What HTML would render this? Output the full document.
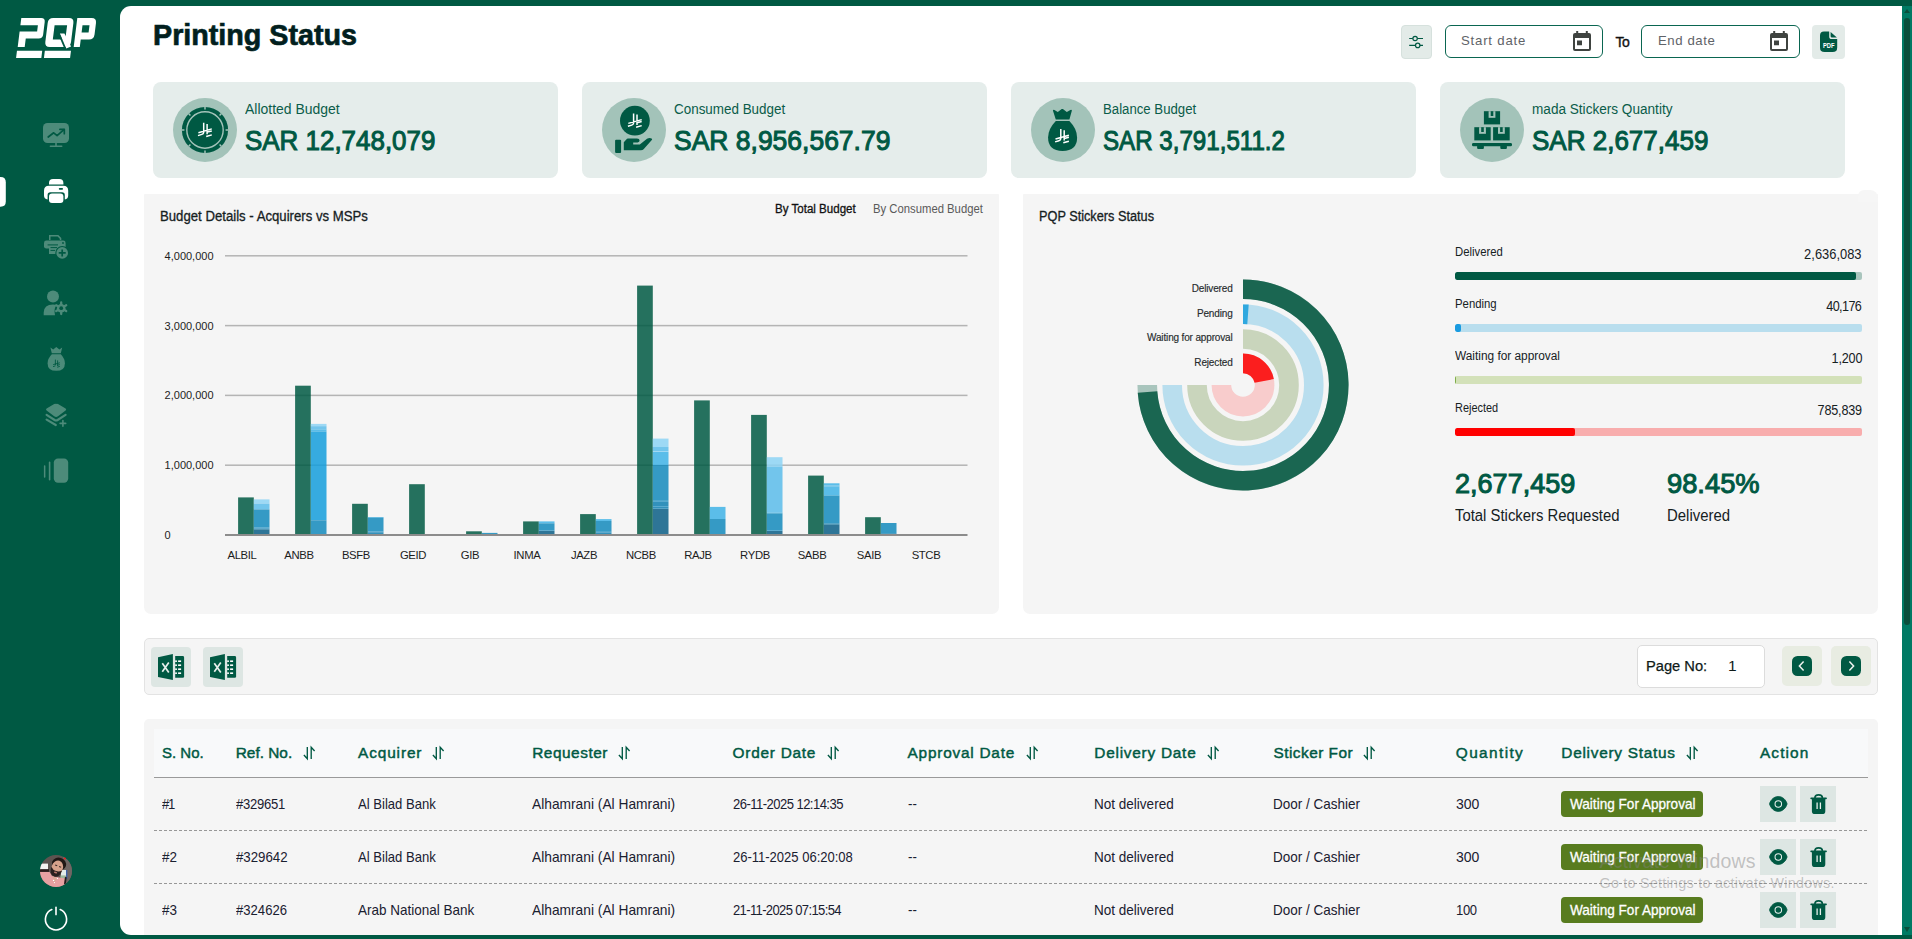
<!DOCTYPE html>
<html lang="en">
<head>
<meta charset="utf-8">
<title>Printing Status</title>
<style>
*{box-sizing:border-box;margin:0;padding:0}
html,body{width:1912px;height:939px;overflow:hidden;background:#005943;font-family:"Liberation Sans",sans-serif;}
body{position:relative}
.abs{position:absolute}
.t{position:absolute;white-space:nowrap;line-height:1}
#main{position:absolute;left:120px;top:6px;width:1782px;height:929px;background:#fff;border-radius:11px 0 0 11px;}
/* scrollbar */
#sb{position:absolute;left:1902px;top:6px;width:10px;height:929px;background:#007a64}
#sb .th{position:absolute;left:2px;top:12px;width:6px;height:607px;border-radius:3px;background:#0a4f3c}
#sb .up{position:absolute;left:2px;top:3px;width:0;height:0;border-left:3px solid transparent;border-right:3px solid transparent;border-bottom:4px solid #0a4f3c}
#sb .dn{position:absolute;left:1.5px;bottom:3px;width:0;height:0;border-left:3.5px solid transparent;border-right:3.5px solid transparent;border-top:5px solid #0a4f3c}
/* cards */
.card{position:absolute;top:82px;width:405px;height:96px;background:#e5edeb;border-radius:8px}
.card .circ{position:absolute;left:20px;top:16px;width:64px;height:64px;border-radius:50%;background:#a3c3b9}
.card .lb{position:absolute;left:92px;top:19px;font-size:14px;color:#0a5c49;white-space:nowrap;line-height:16px}
.card .val{position:absolute;left:92px;top:43px;font-size:27.5px;color:#005943;white-space:nowrap;line-height:32px;-webkit-text-stroke:1.05px #005943}
.panel{position:absolute;top:194px;width:855px;height:420px;background:#f5f5f5;border-radius:1px 1px 7px 7px}
.th{font-size:15.4px;line-height:18px;color:#005943;-webkit-text-stroke:.45px #005943}
.td{font-size:15px;line-height:18px;color:#1a2030}
</style>
</head>
<body>
<div id="main"></div>
<div id="sb"><div class="up"></div><div class="th"></div><div class="dn"></div></div>

<!-- SIDEBAR -->

<svg class="abs" style="left:0;top:0" width="120" height="939" viewBox="0 0 120 939">
 <!-- logo -->
 <g fill="#fff" transform="matrix(1,0,-0.124,1,5.83,0)">
  <path d="M17.7 18 H37.6 Q41.6 18 41.6 22 V34.4 Q41.6 38.4 37.6 38.4 H24.7 V47 H17.7 V31.5 H35.2 V25.2 H17.7 Z"/>
  <path fill-rule="evenodd" d="M49.7 18 H65.4 Q70.4 18 70.4 23 V42 Q70.4 47 65.4 47 H49.7 Q44.7 47 44.7 42 V23 Q44.7 18 49.7 18 Z M51.9 25.2 H64.4 V39.6 H51.9 Z"/>
  <path d="M58 33.6 H62.8 L71 46.4 L66.4 48.4 Z"/>
  <path d="M56.9 33 L65.7 48.8" stroke="#005943" stroke-width="1.7" fill="none"/>
  <path fill-rule="evenodd" d="M73.7 18 H88 Q93 18 93 23 V34.6 Q93 39.6 88 39.6 H79.8 V47 H73.7 Z M79.8 25.2 H86.8 V32.6 H79.8 Z"/>
  <rect x="17.4" y="50.7" width="25.3" height="7.3"/>
  <rect x="45.3" y="50.7" width="26.1" height="7.3"/>
 </g>
 <!-- active marker -->
 <path d="M0 177 H.6 Q5.8 177 5.8 182.2 V201.6 Q5.8 206.8 .6 206.8 H0 Z" fill="#fff"/>
 <!-- icon1 monitor -->
 <g fill="#4d8b7a" stroke="none">
  <rect x="43" y="123" width="26" height="20" rx="4.5"/>
  <rect x="55.2" y="143" width="1.6" height="3"/>
  <rect x="49.6" y="145.5" width="12.9" height="1.6" rx=".8"/>
 </g>
 <g fill="none" stroke="#005943" stroke-width="1.7" stroke-linecap="round" stroke-linejoin="round">
  <path d="M48.2 137 L53.7 132.8 L57.1 135.6 L63.9 129.6"/>
  <path d="M59.9 129.3 H64.3 V133.7"/>
 </g>
 <!-- icon2 printer (active) -->
 <g fill="#fff">
  <path d="M49 184.6 V183 Q49 179 53 179 H59.4 Q63.4 179 63.4 183 V184.6 Z"/>
  <path d="M44 190.8 Q44 185.8 49 185.8 H63.2 Q68.2 185.8 68.2 190.8 V195.5 Q68.2 199 64.8 199.4 V195 Q64.8 192.2 62 192.2 H50.4 Q47.6 192.2 47.6 195 V199.4 Q44 199 44 195.5 Z"/>
  <rect x="49" y="193.5" width="14.4" height="9.5" rx="3"/>
 </g>
 <rect x="58.8" y="188" width="4.2" height="1.7" rx=".8" fill="#005943"/>
 <!-- icon3 printer plus -->
 <g fill="#4d8b7a">
  <path d="M49 240 V235 H58.3 L61.3 238 V240 H59.8 V238.8 L57.6 236.5 H50.5 V240 Z"/>
  <rect x="44" y="240.6" width="21.6" height="8" rx="2.4"/>
  <rect x="49" y="245.4" width="8" height="8.6"/>
 </g>
 <circle cx="63" cy="243" r=".9" fill="#005943"/>
 <path d="M50.5 247.6 H57 M50.5 250.4 H55" stroke="#005943" stroke-width="1" fill="none"/>
 <rect x="47.6" y="244.4" width="10.4" height="1" fill="#005943"/>
 <circle cx="62.2" cy="252.9" r="6.9" fill="#005943"/>
 <circle cx="62.2" cy="252.9" r="5.8" fill="#4d8b7a"/>
 <path d="M62.2 249.4 V256.4 M58.7 252.9 H65.7" stroke="#005943" stroke-width="1.7" fill="none"/>
 <!-- icon4 user gear -->
 <g fill="#4d8b7a">
  <circle cx="53" cy="296.6" r="6"/>
  <path d="M43.7 315.2 V312.5 Q44 304.6 53 304.6 Q55 304.6 56.6 305.2 Q53.6 308 55 315.2 Z"/>
  <circle cx="61.2" cy="308.2" r="4.3"/>
  <g stroke="#4d8b7a" stroke-width="2.3" stroke-linecap="round">
   <path d="M61.2 302.4 V314 M56.2 305.3 L66.2 311.1 M56.2 311.1 L66.2 305.3"/>
  </g>
 </g>
 <circle cx="61.2" cy="308.2" r="1.9" fill="#005943"/>
 <!-- icon5 money bag -->
 <g fill="#4d8b7a">
  <path d="M50.4 347.6 L53.2 349.4 L56.3 347 L59.4 349.4 L62.2 347.6 L60.8 353.3 H51.8 Z"/>
  <path d="M51.8 354.3 H60.8 Q64.9 358.6 64.9 363.4 Q64.9 370.8 56.3 370.8 Q47.6 370.8 47.6 363.4 Q47.6 358.6 51.8 354.3 Z"/>
 </g>
 <g stroke="#005943" stroke-width=".9" fill="none">
  <path d="M55.4 359.6 V365.2 M57.6 360.4 V366 M53.2 364.6 L59.8 362.8 M53 366.6 L55.4 365.9 M57.6 365.2 L59.8 364.6 M57.2 367.2 L59.8 366.4"/>
 </g>
 <!-- icon6 layers plus -->
 <g fill="#4d8b7a">
  <path d="M56.1 403.9 Q57 403.6 58 404 L65.6 408.6 Q66.8 409.6 65.6 410.6 L58 416.2 Q57 416.9 56.1 416.9 Q55.2 416.9 54.2 416.2 L46.6 410.6 Q45.4 409.6 46.6 408.6 L54.2 404 Q55.2 403.6 56.1 403.9 Z"/>
 </g>
 <g stroke="#4d8b7a" fill="none" stroke-linecap="round" stroke-linejoin="round">
  <path d="M46.6 414.8 L54.6 420 Q56.1 420.9 57.6 420 L65.6 414.8" stroke-width="2.2"/>
  <path d="M46.6 419.6 L55.8 425" stroke-width="2.2"/>
  <path d="M62.9 420.6 V426.2 M60.1 423.4 H65.7" stroke-width="1.6"/>
 </g>
 <!-- icon7 carousel -->
 <g fill="#4d8b7a">
  <rect x="53.8" y="458.4" width="14.4" height="24.4" rx="4.2"/>
  <rect x="43.9" y="465.3" width="1.5" height="12.4" rx=".7"/>
  <rect x="48.8" y="461.6" width="1.6" height="19" rx=".8"/>
 </g>
 <!-- avatar -->
 <defs><clipPath id="avc"><circle cx="56" cy="871" r="16"/></clipPath></defs>
 <g clip-path="url(#avc)">
  <rect x="40" y="855" width="32" height="32" fill="#5e5350"/>
  <rect x="63" y="855" width="10" height="28" fill="#6f6664"/>
  <rect x="39" y="863.6" width="9" height="6" fill="#f4f2f0"/>
  <rect x="39" y="869.2" width="10" height="2.6" fill="#2a1c1c"/>
  <rect x="61" y="870" width="5.6" height="6" fill="#e4ecea"/>
  <rect x="60.4" y="875.4" width="5.4" height="4.6" fill="#9db79d"/>
  <rect x="66" y="870" width="1.4" height="9" fill="#3f62a8"/>
  <path d="M39 872 H49.6 L52 876 L58 877.2 L65.4 878.6 V888 H39 Z" fill="#e7a1a2"/>
  <rect x="64.4" y="877" width="1.8" height="7.4" fill="#231c1c" transform="rotate(8 65 881)"/>
  <g transform="rotate(18 57 867)">
   <ellipse cx="58" cy="863.6" rx="7.2" ry="6.4" fill="#1f1715"/>
   <ellipse cx="57.4" cy="867.4" rx="5.7" ry="7.2" fill="#d6a28c"/>
   <path d="M51.6 868.6 Q51.6 876.8 57.2 876.8 Q62.8 876.8 63 868.8 Q60.4 871.4 57.4 871.2 Q54.2 871.4 51.6 868.6 Z" fill="#2a1f1e"/>
   <rect x="54.6" y="865.2" width="2.2" height="1" fill="#3a2a26"/><rect x="58.8" y="865.4" width="2.2" height="1" fill="#3a2a26"/>
   <ellipse cx="57.3" cy="872.6" rx="1.7" ry=".8" fill="#b9786c"/>
  </g>
  <path d="M52.6 876.4 L54.4 882.6 L57.6 878 Z" fill="#d9a896"/>
  <circle cx="53.6" cy="880.4" r=".7" fill="#fff"/><circle cx="57.4" cy="878.4" r=".6" fill="#fff"/><circle cx="54.4" cy="882.6" r=".6" fill="#fff"/>
 </g>
 <circle cx="64.8" cy="858.5" r="1" fill="#f01818"/>
 <!-- power -->
 <g fill="none" stroke="#fff" stroke-width="1.6" stroke-linecap="round">
  <path d="M51.8 909.6 A10.6 10.6 0 1 0 60.2 909.6"/>
  <path d="M56 907.4 V914.6"/>
 </g>
</svg>


<!-- HEADER -->
<div class="t" id="title" style="letter-spacing:0.000px;transform:scaleX(0.9892);transform-origin:left center;left:153.3px;top:18.4px;font-size:29px;font-weight:bold;color:#021f1e;line-height:34px;-webkit-text-stroke:.7px #021f1e">Printing Status</div>


<!-- header controls -->
<div class="abs" style="left:1401px;top:25px;width:31px;height:34px;background:#e3ebe8;border:1px solid #d6e1dd;border-radius:4px"></div>
<svg class="abs" style="left:1401px;top:25px" width="31" height="34" viewBox="0 0 31 34" fill="none" stroke="#005943" stroke-width="1.2">
 <path d="M8.2 13.5 H11.8 M16.4 13.5 H22 M8.2 20.4 H14.4 M19 20.4 H22"/>
 <circle cx="14.1" cy="13.5" r="2.2"/><circle cx="16.7" cy="20.4" r="2.2"/>
</svg>
<div class="abs" style="left:1445px;top:25px;width:158px;height:33px;border:1.5px solid #0a6651;border-radius:6px;background:#fff"></div>
<div class="t" style="letter-spacing:0.790px;left:1461px;top:33.4px;font-size:13.2px;color:#5f6368;line-height:15px">Start date</div>
<svg class="abs" style="left:1573px;top:31px" width="18" height="20" viewBox="0 0 18 20"><path fill="#3f4340" fill-rule="evenodd" d="M3.2 0 H5.2 V2 H12.8 V0 H14.8 V2 H16 Q18 2 18 4 V18 Q18 20 16 20 H2 Q0 20 0 18 V4 Q0 2 2 2 H3.2 Z M2 7 V18 H16 V7 Z M4 9.4 H9 V14.2 H4 Z"/></svg>
<div class="t" style="left:1615.5px;top:34px;font-size:14px;color:#111;line-height:16px;-webkit-text-stroke:.35px #111;letter-spacing:-.6px">To</div>
<div class="abs" style="left:1641px;top:25px;width:159px;height:33px;border:1.5px solid #0a6651;border-radius:6px;background:#fff"></div>
<div class="t" style="letter-spacing:0.572px;left:1658px;top:33.4px;font-size:13.2px;color:#5f6368;line-height:15px">End date</div>
<svg class="abs" style="left:1770px;top:31px" width="18" height="20" viewBox="0 0 18 20"><path fill="#3f4340" fill-rule="evenodd" d="M3.2 0 H5.2 V2 H12.8 V0 H14.8 V2 H16 Q18 2 18 4 V18 Q18 20 16 20 H2 Q0 20 0 18 V4 Q0 2 2 2 H3.2 Z M2 7 V18 H16 V7 Z M4 9.4 H9 V14.2 H4 Z"/></svg>
<div class="abs" style="left:1812px;top:25px;width:33px;height:34px;background:#e3ebe8;border-radius:4px"></div>
<svg class="abs" style="left:1819px;top:31.45px" width="20" height="22" viewBox="0 0 20 22">
 <path fill="#005943" d="M5 .6 H10.2 V5.4 Q10.2 8 12.8 8 H18.2 V16.4 Q18.2 21 13.6 21 H5.6 Q1 21 1 16.4 V4.6 Q1 .6 5 .6 Z M11.6 .9 L17.9 6.6 H13 Q11.6 6.6 11.6 5.2 Z"/>
 <text x="3.9" y="17.3" font-family="Liberation Sans, sans-serif" font-weight="bold" font-size="6.6" fill="#fff" textLength="11.6" lengthAdjust="spacingAndGlyphs">PDF</text>
</svg>

<!-- CARDS -->
<div class="card" style="left:153px"><div class="circ"><svg width="64" height="64" viewBox="-32 -32 64 64" style="position:absolute;left:0;top:0"><circle r="23.1" fill="#005943"/><path d="M0 -23.3 V-20.6" transform="rotate(0)" stroke="#a3c3b9" stroke-width="1.5"/><path d="M0 -23.3 V-20.6" transform="rotate(45)" stroke="#a3c3b9" stroke-width="1.5"/><path d="M0 -23.3 V-20.6" transform="rotate(90)" stroke="#a3c3b9" stroke-width="1.5"/><path d="M0 -23.3 V-20.6" transform="rotate(135)" stroke="#a3c3b9" stroke-width="1.5"/><path d="M0 -23.3 V-20.6" transform="rotate(180)" stroke="#a3c3b9" stroke-width="1.5"/><path d="M0 -23.3 V-20.6" transform="rotate(225)" stroke="#a3c3b9" stroke-width="1.5"/><path d="M0 -23.3 V-20.6" transform="rotate(270)" stroke="#a3c3b9" stroke-width="1.5"/><path d="M0 -23.3 V-20.6" transform="rotate(315)" stroke="#a3c3b9" stroke-width="1.5"/><circle r="18.2" fill="none" stroke="#a3c3b9" stroke-width="1.4"/><g transform="translate(0,-0.3) scale(1)"><g fill="none" stroke="#fff" stroke-width="1.5" stroke-linecap="butt">
<path d="M-1.3 -7 V2.6 Q-1.5 4.2 -3.2 4.7 M2.1 -5.8 V4.5 M-6.6 3 L6.8 -0.8 M-7 5.9 L-3.2 4.7 M2.1 2.4 L6.8 1.2 M1.2 6.8 L6.8 5.2"/></g></g></svg></div><div class="lb" style="letter-spacing:0.000px;transform:scaleX(0.9961);transform-origin:left center;">Allotted Budget</div><div class="val" style="letter-spacing:0.000px;transform:scaleX(0.9434);transform-origin:left center;">SAR 12,748,079</div></div>
<div class="card" style="left:582px"><div class="circ"><svg width="64" height="64" viewBox="-32 -32 64 64" style="position:absolute;left:0;top:0"><circle cx=".9" cy="-9.3" r="14.9" fill="#005943"/><g transform="translate(0.9,-9.6) scale(1)"><g fill="none" stroke="#fff" stroke-width="1.5" stroke-linecap="butt">
<path d="M-1.3 -7 V2.6 Q-1.5 4.2 -3.2 4.7 M2.1 -5.8 V4.5 M-6.6 3 L6.8 -0.8 M-7 5.9 L-3.2 4.7 M2.1 2.4 L6.8 1.2 M1.2 6.8 L6.8 5.2"/></g></g>
<rect x="-18.9" y="9.7" width="6" height="13.2" rx="1" fill="#005943"/>
<path fill="#005943" d="M-10.2 20.2 V12.2 L-7 8.7 Q-6.6 8.5 -6 8.5 H3 Q5.6 8.6 5.6 10.6 Q5.6 12.3 3.6 12.4 H-.8 V14.6 H5.8 L13 8.7 Q15.4 7.6 17.6 8.4 Q18.6 9 17.8 10 L9.6 19.2 Q8.6 20.2 7 20.2 Z"/></svg></div><div class="lb" style="letter-spacing:0.000px;transform:scaleX(0.9589);transform-origin:left center;">Consumed Budget</div><div class="val" style="letter-spacing:0.000px;transform:scaleX(0.9628);transform-origin:left center;">SAR 8,956,567.79</div></div>
<div class="card" style="left:1011px"><div class="circ"><svg width="64" height="64" viewBox="-32 -32 64 64" style="position:absolute;left:0;top:0">
<path fill="#005943" d="M-10.1 -19.6 Q-9.6 -20.6 -8.6 -20 L-5.2 -18 L-1.3 -20.9 Q-.7 -21.3 -.1 -20.9 L3.8 -18 L7.4 -20 Q8.6 -20.6 8.9 -19.4 L6.4 -10.4 H-7.2 Z"/>
<path fill="#005943" d="M-7.2 -8.9 H6.4 Q14.1 -1 14.1 7.6 Q14.1 21 -.4 21 Q-14.9 21 -14.9 7.6 Q-14.9 -1 -7.2 -8.9 Z"/><g transform="translate(-0.9,6) scale(1)"><g fill="none" stroke="#fff" stroke-width="1.5" stroke-linecap="butt">
<path d="M-1.3 -7 V2.6 Q-1.5 4.2 -3.2 4.7 M2.1 -5.8 V4.5 M-6.6 3 L6.8 -0.8 M-7 5.9 L-3.2 4.7 M2.1 2.4 L6.8 1.2 M1.2 6.8 L6.8 5.2"/></g></g></svg></div><div class="lb" style="letter-spacing:0.000px;transform:scaleX(0.9428);transform-origin:left center;">Balance Budget</div><div class="val" style="letter-spacing:0.000px;transform:scaleX(0.8774);transform-origin:left center;">SAR 3,791,511.2</div></div>
<div class="card" style="left:1440px"><div class="circ"><svg width="64" height="64" viewBox="-32 -32 64 64" style="position:absolute;left:0;top:0"><rect x="-8.1" y="-18.8" width="16.2" height="13.2" fill="#005943"/><rect x="-3.4" y="-18.8" width="6.8" height="6.6" fill="#a3c3b9"/><rect x="-1.3" y="-18.8" width="2.6" height="4.8" fill="#005943"/><rect x="-17.7" y="-2.8" width="16.4" height="13.2" fill="#005943"/><rect x="-12.9" y="-2.8" width="6.8" height="6.6" fill="#a3c3b9"/><rect x="-10.8" y="-2.8" width="2.6" height="4.8" fill="#005943"/><rect x="1.1" y="-2.8" width="16.6" height="13.2" fill="#005943"/><rect x="6.0" y="-2.8" width="6.8" height="6.6" fill="#a3c3b9"/><rect x="8.1" y="-2.8" width="2.6" height="4.8" fill="#005943"/>
<rect x="-20" y="13.1" width="40" height="3.2" rx="1.4" fill="#005943"/><rect x="-14.9" y="15.6" width="6.8" height="3.4" rx="1" fill="#005943"/><rect x="8.3" y="15.6" width="6.6" height="3.4" rx="1" fill="#005943"/></svg></div><div class="lb" style="letter-spacing:0.000px;transform:scaleX(0.9707);transform-origin:left center;">mada Stickers Quantity</div><div class="val" style="letter-spacing:0.000px;transform:scaleX(0.9457);transform-origin:left center;">SAR 2,677,459</div></div>

<!-- PANELS -->
<div class="panel" id="p1" style="left:144px"></div>
<div class="panel" id="p2" style="left:1023px"></div>

<svg class="abs" style="left:144px;top:194px" width="855" height="420" viewBox="144 194 855 420" font-family="Liberation Sans, sans-serif">
<rect x="225" y="255.05" width="742.5" height="1.5" fill="#b4b4b4"/>
<rect x="225" y="324.85" width="742.5" height="1.5" fill="#b4b4b4"/>
<rect x="225" y="394.65" width="742.5" height="1.5" fill="#b4b4b4"/>
<rect x="225" y="464.45" width="742.5" height="1.5" fill="#b4b4b4"/>
<rect x="238.1" y="497.4" width="15.7" height="37.6" fill="#005943" fill-opacity=".85"/>
<rect x="253.8" y="499.4" width="15.7" height="4.4" fill="#8dd3f5" fill-opacity=".85"/>
<rect x="253.8" y="503.8" width="15.7" height="5.7" fill="#5bbcea" fill-opacity=".85"/>
<rect x="253.8" y="509.5" width="15.7" height="18.1" fill="#1389bc" fill-opacity=".85"/>
<rect x="253.8" y="527.6" width="15.7" height="1.0" fill="#2a95c6" fill-opacity=".85"/>
<rect x="253.8" y="528.6" width="15.7" height="1.0" fill="#0f7fb0" fill-opacity=".85"/>
<rect x="253.8" y="529.6" width="15.7" height="5.4" fill="#0a5e86" fill-opacity=".85"/>
<rect x="295.1" y="385.7" width="15.7" height="149.3" fill="#005943" fill-opacity=".85"/>
<rect x="310.8" y="423.9" width="15.7" height="2.3" fill="#8dd3f5" fill-opacity=".85"/>
<rect x="310.8" y="426.2" width="15.7" height="3.2" fill="#5bbcea" fill-opacity=".85"/>
<rect x="310.8" y="429.4" width="15.7" height="2.2" fill="#40b3e6" fill-opacity=".85"/>
<rect x="310.8" y="431.6" width="15.7" height="88.4" fill="#149edc" fill-opacity=".85"/>
<rect x="310.8" y="520.0" width="15.7" height="0.8" fill="#2a95c6" fill-opacity=".85"/>
<rect x="310.8" y="520.8" width="15.7" height="14.2" fill="#1389bc" fill-opacity=".85"/>
<rect x="352.1" y="503.8" width="15.7" height="31.2" fill="#005943" fill-opacity=".85"/>
<rect x="367.8" y="517.0" width="15.7" height="0.7" fill="#40b3e6" fill-opacity=".85"/>
<rect x="367.8" y="517.7" width="15.7" height="13.8" fill="#1389bc" fill-opacity=".85"/>
<rect x="367.8" y="531.5" width="15.7" height="0.8" fill="#2a95c6" fill-opacity=".85"/>
<rect x="367.8" y="532.3" width="15.7" height="2.7" fill="#0f7fb0" fill-opacity=".85"/>
<rect x="409.1" y="484.2" width="15.7" height="50.8" fill="#005943" fill-opacity=".85"/>
<rect x="466.1" y="531.3" width="15.7" height="3.7" fill="#005943" fill-opacity=".85"/>
<rect x="481.8" y="532.9" width="15.7" height="2.1" fill="#1389bc" fill-opacity=".85"/>
<rect x="523.1" y="521.4" width="15.7" height="13.6" fill="#005943" fill-opacity=".85"/>
<rect x="538.8" y="521.4" width="15.7" height="2.0" fill="#40b3e6" fill-opacity=".85"/>
<rect x="538.8" y="523.4" width="15.7" height="6.8" fill="#1389bc" fill-opacity=".85"/>
<rect x="538.8" y="530.2" width="15.7" height="0.7" fill="#2a95c6" fill-opacity=".85"/>
<rect x="538.8" y="530.9" width="15.7" height="4.1" fill="#0a5e86" fill-opacity=".85"/>
<rect x="580.1" y="514.1" width="15.7" height="20.9" fill="#005943" fill-opacity=".85"/>
<rect x="595.8" y="519.1" width="15.7" height="1.9" fill="#40b3e6" fill-opacity=".85"/>
<rect x="595.8" y="521.0" width="15.7" height="10.8" fill="#1389bc" fill-opacity=".85"/>
<rect x="595.8" y="531.8" width="15.7" height="0.8" fill="#2a95c6" fill-opacity=".85"/>
<rect x="595.8" y="532.6" width="15.7" height="2.4" fill="#0f7fb0" fill-opacity=".85"/>
<rect x="637.1" y="285.6" width="15.7" height="249.4" fill="#005943" fill-opacity=".85"/>
<rect x="652.8" y="438.6" width="15.7" height="8.4" fill="#8dd3f5" fill-opacity=".85"/>
<rect x="652.8" y="447.0" width="15.7" height="4.2" fill="#5bbcea" fill-opacity=".85"/>
<rect x="652.8" y="451.2" width="15.7" height="0.7" fill="#8dd3f5" fill-opacity=".85"/>
<rect x="652.8" y="451.9" width="15.7" height="13.1" fill="#40b3e6" fill-opacity=".85"/>
<rect x="652.8" y="465.0" width="15.7" height="35.8" fill="#1389bc" fill-opacity=".85"/>
<rect x="652.8" y="500.8" width="15.7" height="1.0" fill="#2a95c6" fill-opacity=".85"/>
<rect x="652.8" y="501.8" width="15.7" height="4.2" fill="#0f7fb0" fill-opacity=".85"/>
<rect x="652.8" y="506.0" width="15.7" height="0.8" fill="#2a95c6" fill-opacity=".85"/>
<rect x="652.8" y="506.8" width="15.7" height="1.2" fill="#0f7fb0" fill-opacity=".85"/>
<rect x="652.8" y="508.0" width="15.7" height="0.8" fill="#2a95c6" fill-opacity=".85"/>
<rect x="652.8" y="508.8" width="15.7" height="26.2" fill="#0a5e86" fill-opacity=".85"/>
<rect x="694.1" y="400.4" width="15.7" height="134.6" fill="#005943" fill-opacity=".85"/>
<rect x="709.8" y="506.9" width="15.7" height="12.1" fill="#40b3e6" fill-opacity=".85"/>
<rect x="709.8" y="519.0" width="15.7" height="16.0" fill="#1389bc" fill-opacity=".85"/>
<rect x="751.1" y="414.9" width="15.7" height="120.1" fill="#005943" fill-opacity=".85"/>
<rect x="766.8" y="457.2" width="15.7" height="9.3" fill="#8dd3f5" fill-opacity=".85"/>
<rect x="766.8" y="466.5" width="15.7" height="46.1" fill="#5bbcea" fill-opacity=".85"/>
<rect x="766.8" y="512.6" width="15.7" height="0.8" fill="#40b3e6" fill-opacity=".85"/>
<rect x="766.8" y="513.4" width="15.7" height="16.8" fill="#1389bc" fill-opacity=".85"/>
<rect x="766.8" y="530.2" width="15.7" height="0.8" fill="#2a95c6" fill-opacity=".85"/>
<rect x="766.8" y="531.0" width="15.7" height="4.0" fill="#0a5e86" fill-opacity=".85"/>
<rect x="808.1" y="475.6" width="15.7" height="59.4" fill="#005943" fill-opacity=".85"/>
<rect x="823.8" y="483.3" width="15.7" height="2.3" fill="#40b3e6" fill-opacity=".85"/>
<rect x="823.8" y="485.6" width="15.7" height="0.8" fill="#5bbcea" fill-opacity=".85"/>
<rect x="823.8" y="486.4" width="15.7" height="9.2" fill="#40b3e6" fill-opacity=".85"/>
<rect x="823.8" y="495.6" width="15.7" height="27.8" fill="#1389bc" fill-opacity=".85"/>
<rect x="823.8" y="523.4" width="15.7" height="1.2" fill="#0f7fb0" fill-opacity=".85"/>
<rect x="823.8" y="524.6" width="15.7" height="10.4" fill="#0a5e86" fill-opacity=".85"/>
<rect x="865.1" y="517.2" width="15.7" height="17.8" fill="#005943" fill-opacity=".85"/>
<rect x="880.8" y="523.0" width="15.7" height="10.2" fill="#1389bc" fill-opacity=".85"/>
<rect x="880.8" y="533.2" width="15.7" height="1.8" fill="#0f7fb0" fill-opacity=".85"/>
<rect x="922.1" y="534.0" width="15.7" height="1.0" fill="#005943" fill-opacity=".85"/>
<rect x="225" y="534" width="742.5" height="2" fill="#8c8c8c"/>
<text x="164.6" y="259.7" font-size="11" fill="#1d1d1d">4,000,000</text>
<text x="164.6" y="329.5" font-size="11" fill="#1d1d1d">3,000,000</text>
<text x="164.6" y="399.3" font-size="11" fill="#1d1d1d">2,000,000</text>
<text x="164.6" y="469.1" font-size="11" fill="#1d1d1d">1,000,000</text>
<text x="164.6" y="538.9" font-size="11" fill="#1d1d1d">0</text>
<text x="242" y="559" font-size="11.3" fill="#1d1d1d" text-anchor="middle" letter-spacing="-.35">ALBIL</text>
<text x="299" y="559" font-size="11.3" fill="#1d1d1d" text-anchor="middle" letter-spacing="-.35">ANBB</text>
<text x="356" y="559" font-size="11.3" fill="#1d1d1d" text-anchor="middle" letter-spacing="-.35">BSFB</text>
<text x="413" y="559" font-size="11.3" fill="#1d1d1d" text-anchor="middle" letter-spacing="-.35">GEID</text>
<text x="470" y="559" font-size="11.3" fill="#1d1d1d" text-anchor="middle" letter-spacing="-.35">GIB</text>
<text x="527" y="559" font-size="11.3" fill="#1d1d1d" text-anchor="middle" letter-spacing="-.35">INMA</text>
<text x="584" y="559" font-size="11.3" fill="#1d1d1d" text-anchor="middle" letter-spacing="-.35">JAZB</text>
<text x="641" y="559" font-size="11.3" fill="#1d1d1d" text-anchor="middle" letter-spacing="-.35">NCBB</text>
<text x="698" y="559" font-size="11.3" fill="#1d1d1d" text-anchor="middle" letter-spacing="-.35">RAJB</text>
<text x="755" y="559" font-size="11.3" fill="#1d1d1d" text-anchor="middle" letter-spacing="-.35">RYDB</text>
<text x="812" y="559" font-size="11.3" fill="#1d1d1d" text-anchor="middle" letter-spacing="-.35">SABB</text>
<text x="869" y="559" font-size="11.3" fill="#1d1d1d" text-anchor="middle" letter-spacing="-.35">SAIB</text>
<text x="926" y="559" font-size="11.3" fill="#1d1d1d" text-anchor="middle" letter-spacing="-.35">STCB</text>
</svg>
<div class="t" id="bt" style="letter-spacing:0.000px;transform:scaleX(0.9408);transform-origin:left center;left:159.5px;top:208px;font-size:14px;color:#16211f;line-height:16px;-webkit-text-stroke:.3px #16211f">Budget Details - Acquirers vs MSPs</div>
<div class="t" id="bt1" style="letter-spacing:0.000px;transform:scaleX(0.9625);transform-origin:left center;left:775px;top:202px;font-size:12px;color:#111;line-height:14px;-webkit-text-stroke:.3px #111">By Total Budget</div>
<div class="t" id="bt2" style="letter-spacing:0.000px;transform:scaleX(0.9413);transform-origin:left center;left:872.5px;top:202px;font-size:12px;color:#5a5a5a;line-height:14px">By Consumed Budget</div>
<svg class="abs" style="left:1023px;top:194px" width="855" height="420" viewBox="1023 194 855 420" font-family="Liberation Sans, sans-serif" fill="none">
<path d="M1243.00 289.25 A95.75 95.75 0 1 1 1147.25 385.00" stroke="#a9c5bd" stroke-width="19.6"/>
<path d="M1243.00 289.25 A95.75 95.75 0 1 1 1147.51 392.01" stroke="#1a6651" stroke-width="19.6"/>
<path d="M1243.00 314.20 A70.8 70.8 0 1 1 1172.20 385.00" stroke="#b9deee" stroke-width="19.6"/>
<path d="M1243.00 314.20 A70.8 70.8 0 0 1 1248.00 314.38" stroke="#2fa8df" stroke-width="19.6"/>
<path d="M1243.00 339.00 A46.0 46.0 0 1 1 1197.00 385.00" stroke="#c9d5bc" stroke-width="19.6"/>
<path d="M1243.00 363.40 A21.6 21.6 0 1 1 1221.40 385.00" stroke="#f8cccc" stroke-width="19.6"/>
<path d="M1243.00 363.40 A21.6 21.6 0 0 1 1264.22 380.95" stroke="#fb1e1e" stroke-width="19.6"/>
<text x="1232.6" y="292.2" font-size="10" fill="#262b2d" stroke="#262b2d" stroke-width=".15" text-anchor="end" letter-spacing="-.15">Delivered</text>
<text x="1232.6" y="316.6" font-size="10" fill="#262b2d" stroke="#262b2d" stroke-width=".15" text-anchor="end" letter-spacing="-.15">Pending</text>
<text x="1232.6" y="341.4" font-size="10" fill="#262b2d" stroke="#262b2d" stroke-width=".15" text-anchor="end" letter-spacing="-.15">Waiting for approval</text>
<text x="1232.6" y="366.0" font-size="10" fill="#262b2d" stroke="#262b2d" stroke-width=".15" text-anchor="end" letter-spacing="-.15">Rejected</text>
</svg>
<div class="abs" style="left:1858px;top:190px;width:20px;height:12px;background:#f6f6f6;border-radius:6px 8px 0 0"></div>
<div class="t" id="pt" style="letter-spacing:0.000px;transform:scaleX(0.9085);transform-origin:left center;left:1039px;top:208px;font-size:14px;color:#16211f;line-height:16px;-webkit-text-stroke:.3px #16211f">PQP Stickers Status</div>
<div class="t pl" style="letter-spacing:0.000px;transform:scaleX(0.9427);transform-origin:left center;left:1455px;top:245px;font-size:12px;color:#16211f;line-height:14px">Delivered</div><div class="t pv" style="letter-spacing:0.000px;transform:scaleX(0.8897);transform-origin:right center;margin-right:-0.00px;right:50px;top:246px;font-size:14.5px;color:#16211f;line-height:17px;">2,636,083</div><div class="abs" style="left:1455px;top:272px;width:407px;height:8px;border-radius:2px;background:#a9c5bd;overflow:hidden"><div style="width:400.7px;height:8px;background:#005943;border-radius:2px"></div></div>
<div class="t pl" style="letter-spacing:0.000px;transform:scaleX(0.9467);transform-origin:left center;left:1455px;top:297px;font-size:12px;color:#16211f;line-height:14px">Pending</div><div class="t pv" style="letter-spacing:-0.688px;transform:scaleX(0.8700);transform-origin:right center;margin-right:0.60px;right:50px;top:298px;font-size:14.5px;color:#16211f;line-height:17px;">40,176</div><div class="abs" style="left:1455px;top:324px;width:407px;height:8px;border-radius:2px;background:#b9deee;overflow:hidden"><div style="width:6px;height:8px;background:#1a9be0;border-radius:2px"></div></div>
<div class="t pl" style="letter-spacing:0.000px;transform:scaleX(0.9879);transform-origin:left center;left:1455px;top:349px;font-size:12px;color:#16211f;line-height:14px">Waiting for approval</div><div class="t pv" style="letter-spacing:-0.195px;transform:scaleX(0.8700);transform-origin:right center;margin-right:0.17px;right:50px;top:350px;font-size:14.5px;color:#16211f;line-height:17px;">1,200</div><div class="abs" style="left:1455px;top:376px;width:407px;height:8px;border-radius:2px;background:#d3e1b9;overflow:hidden"><div style="width:1px;height:8px;background:#7fae4a;border-radius:2px"></div></div>
<div class="t pl" style="letter-spacing:0.000px;transform:scaleX(0.9098);transform-origin:left center;left:1455px;top:401px;font-size:12px;color:#16211f;line-height:14px">Rejected</div><div class="t pv" style="letter-spacing:-0.212px;transform:scaleX(0.8700);transform-origin:right center;margin-right:0.18px;right:50px;top:402px;font-size:14.5px;color:#16211f;line-height:17px;">785,839</div><div class="abs" style="left:1455px;top:428px;width:407px;height:8px;border-radius:2px;background:#f8adad;overflow:hidden"><div style="width:119.5px;height:8px;background:#ff0000;border-radius:2px"></div></div>

<div class="t" id="big1" style="letter-spacing:0.000px;transform:scaleX(0.9833);transform-origin:left center;left:1454.5px;top:468px;font-size:27.5px;color:#005943;line-height:32px;-webkit-text-stroke:1.05px #005943">2,677,459</div>
<div class="t" id="sm1" style="letter-spacing:0.000px;transform:scaleX(0.9295);transform-origin:left center;left:1455px;top:507px;font-size:16px;color:#16211f;line-height:18px">Total Stickers Requested</div>
<div class="t" id="big2" style="letter-spacing:0.000px;transform:scaleX(0.9927);transform-origin:left center;left:1667px;top:468px;font-size:27.5px;color:#005943;line-height:32px;-webkit-text-stroke:1.05px #005943">98.45%</div>
<div class="t" id="sm2" style="letter-spacing:0.000px;transform:scaleX(0.9320);transform-origin:left center;left:1667px;top:507px;font-size:16px;color:#16211f;line-height:18px">Delivered</div>


<div class="abs" style="left:144px;top:638px;width:1734px;height:57px;background:#f5f5f5;border:1px solid #e3e3e3;border-radius:5px"></div>
<div class="abs" style="left:151px;top:647px;width:40px;height:40px;background:#dde6e3;border-radius:4px"><svg width="40" height="40" viewBox="151 647 40 40" style="position:absolute;left:0;top:0">
<path fill="#005943" d="M158 657.2 L172.9 654.1 V679.9 L158 676.9 Z"/>
<path fill="#005943" d="M175.2 656.1 H182.8 Q184.1 656.1 184.1 657.4 V676.5 Q184.1 677.8 182.8 677.8 H175.2 Z"/>
<g fill="#fff"><rect x="175.2" y="660.4" width="1.7" height="1.6"/><rect x="178.1" y="660.4" width="3" height="1.6"/><rect x="175.2" y="664.4" width="1.7" height="1.6"/><rect x="178.1" y="664.4" width="3" height="1.6"/><rect x="175.2" y="668.4" width="1.7" height="1.6"/><rect x="178.1" y="668.4" width="3" height="1.6"/><rect x="175.2" y="672.4" width="1.7" height="1.6"/><rect x="178.1" y="672.4" width="3" height="1.6"/></g>
<path d="M162.3 663.2 L168.8 672.6 M168.8 662.6 L162.3 671.7" stroke="#e6efec" stroke-width="1.7" fill="none"/></svg></div>
<div class="abs" style="left:203px;top:647px;width:40px;height:40px;background:#dde6e3;border-radius:4px"><svg width="40" height="40" viewBox="151 647 40 40" style="position:absolute;left:0;top:0">
<path fill="#005943" d="M158 657.2 L172.9 654.1 V679.9 L158 676.9 Z"/>
<path fill="#005943" d="M175.2 656.1 H182.8 Q184.1 656.1 184.1 657.4 V676.5 Q184.1 677.8 182.8 677.8 H175.2 Z"/>
<g fill="#fff"><rect x="175.2" y="660.4" width="1.7" height="1.6"/><rect x="178.1" y="660.4" width="3" height="1.6"/><rect x="175.2" y="664.4" width="1.7" height="1.6"/><rect x="178.1" y="664.4" width="3" height="1.6"/><rect x="175.2" y="668.4" width="1.7" height="1.6"/><rect x="178.1" y="668.4" width="3" height="1.6"/><rect x="175.2" y="672.4" width="1.7" height="1.6"/><rect x="178.1" y="672.4" width="3" height="1.6"/></g>
<path d="M162.3 663.2 L168.8 672.6 M168.8 662.6 L162.3 671.7" stroke="#e6efec" stroke-width="1.7" fill="none"/></svg></div>
<div class="abs" style="left:1637px;top:645px;width:128px;height:43px;background:#fff;border:1px solid #dcdcdc;border-radius:5px"></div>
<div class="t" style="letter-spacing:0.000px;transform:scaleX(0.9468);transform-origin:left center;left:1646.3px;top:656.5px;font-size:15.5px;line-height:18px;color:#0f1a18;-webkit-text-stroke:.25px #0f1a18">Page No:</div>
<div class="t" style="left:1728px;top:656.5px;font-size:15.5px;line-height:18px;color:#0f1a18">1</div>
<div class="abs" style="left:1782px;top:646px;width:40px;height:40px;background:#e8ece2;border-radius:5px"></div>
<div class="abs" style="left:1831px;top:646px;width:40px;height:40px;background:#e8ece2;border-radius:5px"></div>
<svg class="abs" style="left:1791.7px;top:656px" width="20" height="20" viewBox="0 0 20 20"><rect width="20" height="20" rx="5.5" fill="#005943"/><path d="M11.6 5.6 L7.4 10 L11.6 14.4" fill="none" stroke="#eef3f0" stroke-width="1.5"/></svg>
<svg class="abs" style="left:1840.8px;top:656px" width="20" height="20" viewBox="0 0 20 20"><rect width="20" height="20" rx="5.5" fill="#005943"/><path d="M8.4 5.6 L12.6 10 L8.4 14.4" fill="none" stroke="#eef3f0" stroke-width="1.5"/></svg>


<div class="abs" style="left:144px;top:719px;width:1734px;height:230px;background:#f5f5f5;border-radius:5px 5px 0 0"></div>
<div class="abs" style="left:154px;top:729px;width:1714px;height:48.6px;background:#f8f9fa;border-bottom:1.2px solid #9a9a9a"></div>
<div class="t th" style="letter-spacing:0.000px;transform:scaleX(0.9747);transform-origin:left center;left:162px;top:743.8px">S. No.</div>
<div class="t th" style="letter-spacing:0.007px;left:235.7px;top:743.8px">Ref. No.</div><svg class="abs" style="left:303.1px;top:745px" width="14" height="16" viewBox="0 0 14 16" fill="none" stroke="#005943" stroke-width="1.35"><path d="M4.3 2 V13.8 L.9 10 M8.2 14 V2.2 L11.6 6"/></svg>
<div class="t th" style="letter-spacing:0.884px;left:358px;top:743.8px">Acquirer</div><svg class="abs" style="left:432px;top:745px" width="14" height="16" viewBox="0 0 14 16" fill="none" stroke="#005943" stroke-width="1.35"><path d="M4.3 2 V13.8 L.9 10 M8.2 14 V2.2 L11.6 6"/></svg>
<div class="t th" style="letter-spacing:0.536px;left:532.2px;top:743.8px">Requester</div><svg class="abs" style="left:617.6px;top:745px" width="14" height="16" viewBox="0 0 14 16" fill="none" stroke="#005943" stroke-width="1.35"><path d="M4.3 2 V13.8 L.9 10 M8.2 14 V2.2 L11.6 6"/></svg>
<div class="t th" style="letter-spacing:0.740px;left:732.6px;top:743.8px">Order Date</div><svg class="abs" style="left:826.6px;top:745px" width="14" height="16" viewBox="0 0 14 16" fill="none" stroke="#005943" stroke-width="1.35"><path d="M4.3 2 V13.8 L.9 10 M8.2 14 V2.2 L11.6 6"/></svg>
<div class="t th" style="letter-spacing:0.764px;left:907.6px;top:743.8px">Approval Date</div><svg class="abs" style="left:1025.5px;top:745px" width="14" height="16" viewBox="0 0 14 16" fill="none" stroke="#005943" stroke-width="1.35"><path d="M4.3 2 V13.8 L.9 10 M8.2 14 V2.2 L11.6 6"/></svg>
<div class="t th" style="letter-spacing:0.752px;left:1094.3px;top:743.8px">Delivery Date</div><svg class="abs" style="left:1207px;top:745px" width="14" height="16" viewBox="0 0 14 16" fill="none" stroke="#005943" stroke-width="1.35"><path d="M4.3 2 V13.8 L.9 10 M8.2 14 V2.2 L11.6 6"/></svg>
<div class="t th" style="letter-spacing:0.489px;left:1273.4px;top:743.8px">Sticker For</div><svg class="abs" style="left:1363px;top:745px" width="14" height="16" viewBox="0 0 14 16" fill="none" stroke="#005943" stroke-width="1.35"><path d="M4.3 2 V13.8 L.9 10 M8.2 14 V2.2 L11.6 6"/></svg>
<div class="t th" style="letter-spacing:1.382px;left:1455.8px;top:743.8px">Quantity</div>
<div class="t th" style="letter-spacing:0.729px;left:1561.3px;top:743.8px">Delivery Status</div><svg class="abs" style="left:1686px;top:745px" width="14" height="16" viewBox="0 0 14 16" fill="none" stroke="#005943" stroke-width="1.35"><path d="M4.3 2 V13.8 L.9 10 M8.2 14 V2.2 L11.6 6"/></svg>
<div class="t th" style="letter-spacing:1.104px;left:1760px;top:743.8px">Action</div>
<div class="t td" style="letter-spacing:-1.515px;transform:scaleX(0.8700);transform-origin:left center;left:162px;top:794.8px">#1</div><div class="t td" style="letter-spacing:-0.290px;transform:scaleX(0.8700);transform-origin:left center;left:235.7px;top:794.8px">#329651</div><div class="t td" style="letter-spacing:0.000px;transform:scaleX(0.8731);transform-origin:left center;left:358px;top:794.8px">Al Bilad Bank</div><div class="t td" style="letter-spacing:0.000px;transform:scaleX(0.9180);transform-origin:left center;left:532.2px;top:794.8px">Alhamrani (Al Hamrani)</div><div class="t td" style="letter-spacing:-0.626px;transform:scaleX(0.8700);transform-origin:left center;left:732.6px;top:794.8px">26-11-2025 12:14:35</div><div class="t td" style="letter-spacing:0.000px;transform:scaleX(0.8800);transform-origin:left center;left:907.6px;top:794.8px">--</div><div class="t td" style="letter-spacing:0.000px;transform:scaleX(0.9017);transform-origin:left center;left:1094.3px;top:794.8px">Not delivered</div><div class="t td" style="letter-spacing:0.000px;transform:scaleX(0.8997);transform-origin:left center;left:1273.4px;top:794.8px">Door / Cashier</div><div class="t td" style="letter-spacing:0.000px;transform:scaleX(0.9348);transform-origin:left center;left:1455.8px;top:794.8px">300</div><div class="abs" style="left:1561px;top:791px;width:142px;height:26px;background:#587c1f;border-radius:4px"></div><div class="t" style="letter-spacing:0.000px;transform:scaleX(0.9050);transform-origin:left center;left:1569.6px;top:794.7px;font-size:15px;line-height:18px;color:#fff;-webkit-text-stroke:.3px #fff">Waiting For Approval</div><div class="abs" style="left:1760px;top:786px;width:36px;height:36px;background:#dde6e3"><svg width="36" height="36" viewBox="0 0 36 36" style="position:absolute;left:0;top:0"><path fill="#005943" stroke="#005943" stroke-width=".8" stroke-linejoin="round" d="M9.5 17.9 C10.7 13.6 14.2 10.5 18.3 10.5 C22.4 10.5 25.9 13.6 27.1 17.9 C25.9 22.2 22.4 25.4 18.3 25.4 C14.2 25.4 10.7 22.2 9.5 17.9 Z"/><circle cx="18.3" cy="17.95" r="3.25" fill="none" stroke="#e6efec" stroke-width="1.05"/></svg></div><div class="abs" style="left:1800px;top:786px;width:36px;height:36px;background:#dde6e3"><svg width="36" height="36" viewBox="0 0 36 36" style="position:absolute;left:0;top:0"><path fill="none" stroke="#005943" stroke-width="1.7" d="M14.9 12.2 Q14.9 8.9 18.6 8.9 Q22.4 8.9 22.4 12.2"/><rect x="10.3" y="11.6" width="16.6" height="1.6" rx=".8" fill="#005943"/><path fill="#005943" d="M11.9 12.4 H25.3 V24.9 Q25.3 28.1 22.1 28.1 H15.1 Q11.9 28.1 11.9 24.9 Z"/><path d="M17.1 16.6 V22.9 M20.4 16.6 V22.9" stroke="#e6efec" stroke-width="1.3" fill="none"/></svg></div>
<div class="t td" style="letter-spacing:0.000px;transform:scaleX(0.8989);transform-origin:left center;left:162px;top:847.8px">#2</div><div class="t td" style="letter-spacing:0.000px;transform:scaleX(0.8835);transform-origin:left center;left:235.7px;top:847.8px">#329642</div><div class="t td" style="letter-spacing:0.000px;transform:scaleX(0.8731);transform-origin:left center;left:358px;top:847.8px">Al Bilad Bank</div><div class="t td" style="letter-spacing:0.000px;transform:scaleX(0.9180);transform-origin:left center;left:532.2px;top:847.8px">Alhamrani (Al Hamrani)</div><div class="t td" style="letter-spacing:-0.026px;transform:scaleX(0.8700);transform-origin:left center;left:732.6px;top:847.8px">26-11-2025 06:20:08</div><div class="t td" style="letter-spacing:0.000px;transform:scaleX(0.8800);transform-origin:left center;left:907.6px;top:847.8px">--</div><div class="t td" style="letter-spacing:0.000px;transform:scaleX(0.9017);transform-origin:left center;left:1094.3px;top:847.8px">Not delivered</div><div class="t td" style="letter-spacing:0.000px;transform:scaleX(0.8997);transform-origin:left center;left:1273.4px;top:847.8px">Door / Cashier</div><div class="t td" style="letter-spacing:0.000px;transform:scaleX(0.9348);transform-origin:left center;left:1455.8px;top:847.8px">300</div><div class="abs" style="left:1561px;top:844px;width:142px;height:26px;background:#587c1f;border-radius:4px"></div><div class="t" style="letter-spacing:0.000px;transform:scaleX(0.9050);transform-origin:left center;left:1569.6px;top:847.7px;font-size:15px;line-height:18px;color:#fff;-webkit-text-stroke:.3px #fff">Waiting For Approval</div><div class="abs" style="left:1760px;top:839px;width:36px;height:36px;background:#dde6e3"><svg width="36" height="36" viewBox="0 0 36 36" style="position:absolute;left:0;top:0"><path fill="#005943" stroke="#005943" stroke-width=".8" stroke-linejoin="round" d="M9.5 17.9 C10.7 13.6 14.2 10.5 18.3 10.5 C22.4 10.5 25.9 13.6 27.1 17.9 C25.9 22.2 22.4 25.4 18.3 25.4 C14.2 25.4 10.7 22.2 9.5 17.9 Z"/><circle cx="18.3" cy="17.95" r="3.25" fill="none" stroke="#e6efec" stroke-width="1.05"/></svg></div><div class="abs" style="left:1800px;top:839px;width:36px;height:36px;background:#dde6e3"><svg width="36" height="36" viewBox="0 0 36 36" style="position:absolute;left:0;top:0"><path fill="none" stroke="#005943" stroke-width="1.7" d="M14.9 12.2 Q14.9 8.9 18.6 8.9 Q22.4 8.9 22.4 12.2"/><rect x="10.3" y="11.6" width="16.6" height="1.6" rx=".8" fill="#005943"/><path fill="#005943" d="M11.9 12.4 H25.3 V24.9 Q25.3 28.1 22.1 28.1 H15.1 Q11.9 28.1 11.9 24.9 Z"/><path d="M17.1 16.6 V22.9 M20.4 16.6 V22.9" stroke="#e6efec" stroke-width="1.3" fill="none"/></svg></div>
<div class="t td" style="letter-spacing:0.000px;transform:scaleX(0.8989);transform-origin:left center;left:162px;top:900.8px">#3</div><div class="t td" style="letter-spacing:-0.000px;transform:scaleX(0.8732);transform-origin:left center;left:235.7px;top:900.8px">#324626</div><div class="t td" style="letter-spacing:0.000px;transform:scaleX(0.8990);transform-origin:left center;left:358px;top:900.8px">Arab National Bank</div><div class="t td" style="letter-spacing:0.000px;transform:scaleX(0.9180);transform-origin:left center;left:532.2px;top:900.8px">Alhamrani (Al Hamrani)</div><div class="t td" style="letter-spacing:-0.748px;transform:scaleX(0.8700);transform-origin:left center;left:732.6px;top:900.8px">21-11-2025 07:15:54</div><div class="t td" style="letter-spacing:0.000px;transform:scaleX(0.8800);transform-origin:left center;left:907.6px;top:900.8px">--</div><div class="t td" style="letter-spacing:0.000px;transform:scaleX(0.9017);transform-origin:left center;left:1094.3px;top:900.8px">Not delivered</div><div class="t td" style="letter-spacing:0.000px;transform:scaleX(0.8997);transform-origin:left center;left:1273.4px;top:900.8px">Door / Cashier</div><div class="t td" style="letter-spacing:-0.389px;transform:scaleX(0.8700);transform-origin:left center;left:1455.8px;top:900.8px">100</div><div class="abs" style="left:1561px;top:897px;width:142px;height:26px;background:#587c1f;border-radius:4px"></div><div class="t" style="letter-spacing:0.000px;transform:scaleX(0.9050);transform-origin:left center;left:1569.6px;top:900.7px;font-size:15px;line-height:18px;color:#fff;-webkit-text-stroke:.3px #fff">Waiting For Approval</div><div class="abs" style="left:1760px;top:892px;width:36px;height:36px;background:#dde6e3"><svg width="36" height="36" viewBox="0 0 36 36" style="position:absolute;left:0;top:0"><path fill="#005943" stroke="#005943" stroke-width=".8" stroke-linejoin="round" d="M9.5 17.9 C10.7 13.6 14.2 10.5 18.3 10.5 C22.4 10.5 25.9 13.6 27.1 17.9 C25.9 22.2 22.4 25.4 18.3 25.4 C14.2 25.4 10.7 22.2 9.5 17.9 Z"/><circle cx="18.3" cy="17.95" r="3.25" fill="none" stroke="#e6efec" stroke-width="1.05"/></svg></div><div class="abs" style="left:1800px;top:892px;width:36px;height:36px;background:#dde6e3"><svg width="36" height="36" viewBox="0 0 36 36" style="position:absolute;left:0;top:0"><path fill="none" stroke="#005943" stroke-width="1.7" d="M14.9 12.2 Q14.9 8.9 18.6 8.9 Q22.4 8.9 22.4 12.2"/><rect x="10.3" y="11.6" width="16.6" height="1.6" rx=".8" fill="#005943"/><path fill="#005943" d="M11.9 12.4 H25.3 V24.9 Q25.3 28.1 22.1 28.1 H15.1 Q11.9 28.1 11.9 24.9 Z"/><path d="M17.1 16.6 V22.9 M20.4 16.6 V22.9" stroke="#e6efec" stroke-width="1.3" fill="none"/></svg></div>
<div class="abs" style="left:154px;top:830px;width:1714px;height:1px;background:repeating-linear-gradient(90deg,#979797 0 3px,transparent 3px 5px)"></div>
<div class="abs" style="left:154px;top:883px;width:1714px;height:1px;background:repeating-linear-gradient(90deg,#979797 0 3px,transparent 3px 5px)"></div>
<div class="t" style="letter-spacing:0.141px;left:1599.5px;top:849.5px;font-size:19.5px;line-height:23px;color:rgba(128,128,128,.46)">Activate Windows</div><div class="t" style="letter-spacing:0.274px;left:1599.5px;top:875px;font-size:14.3px;line-height:17px;color:rgba(128,128,128,.46)">Go to Settings to activate Windows.</div>
<div class="abs" style="left:120px;top:935px;width:1792px;height:4px;background:#005943"></div>
</body>
</html>
